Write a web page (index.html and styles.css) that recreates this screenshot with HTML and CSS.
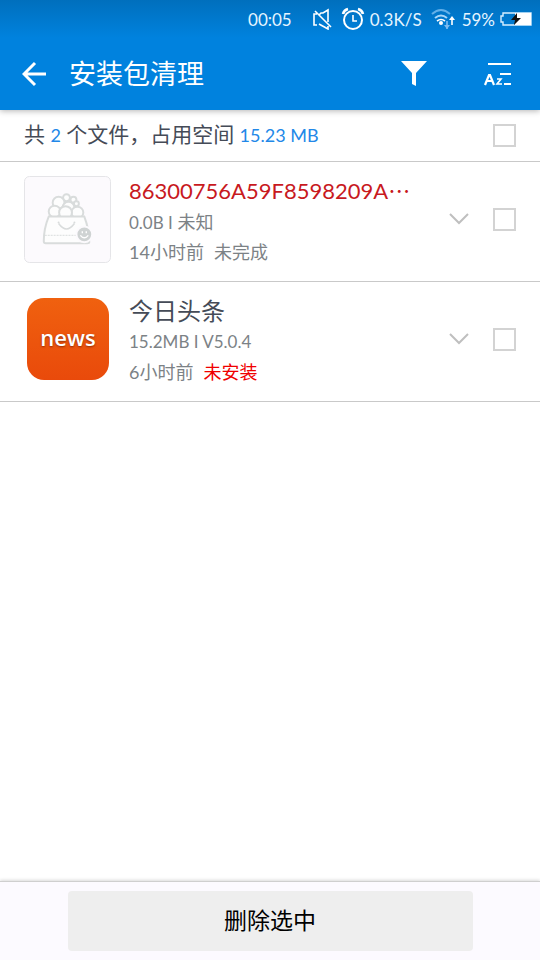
FILE: index.html
```html
<!DOCTYPE html>
<html lang="zh-CN">
<head>
<meta charset="utf-8">
<meta name="viewport" content="width=device-width, initial-scale=1">
<title>安装包清理</title>
<link rel="stylesheet" href="styles.css">
</head>
<body>
<header class="top">
  <div class="status">
    <time class="clock">00:05</time>
    <svg class="mute" width="20" height="22" viewBox="0 0 20 22" fill="none" stroke="#fff" stroke-width="1.600"><path d="M5 6H2v11h3M7 7l2-2h2l5-3v12M7 16l9 5v-3M3 3l16 16"/></svg>
    <svg class="alarm" width="24" height="24" viewBox="0 0 24 24" fill="none" stroke="#fff"><circle cx="12" cy="13" r="9" stroke-width="2"/><path d="M12 8v6h4" stroke-width="1.600"/><path d="M2 7q1-4 5-5M17 2q4 1 5 5" stroke-width="2.600"/></svg>
    <span class="speed">0.3K/S</span>
    <svg class="wifi" width="26" height="22" viewBox="0 0 26 22" fill="none" stroke="#fff"><path d="M1 6q9-8 18 0" stroke="#63b0e8" stroke-width="2"/><path d="M4 10q6-5 12 0" stroke="#a9d6f8" stroke-width="2"/><path d="M6 13q4-3 8 0" stroke-width="1.600"/><circle cx="10" cy="15" r="2" fill="#fff" stroke="none"/><path d="M16 13v8" stroke="#7dbcf0" stroke-width="1.600"/><path d="M13 17h6l-3 4z" fill="#7dbcf0" stroke="none"/><path d="M21 17V10" stroke-width="1.600"/><path d="M18 12l3-4 3 4z" fill="#fff" stroke="none"/></svg>
    <span class="percent">59%</span>
    <svg class="battery" width="32" height="14" viewBox="0 0 32 14"><path d="M3 1h28v12H3v-3H1V4h2z" fill="none" stroke="#d8efff" stroke-width="1.400"/><path d="M15 1h16v12H15z" fill="#fff"/><path d="M17 1l-6 7h4l-1 5 7-7h-4z" fill="#111"/></svg>
  </div>
  <div class="bar">
    <button class="icon-button back" aria-label="返回"><svg width="26" height="26" viewBox="0 0 26 26" fill="none" stroke="#fff" stroke-width="3"><path d="M2 13h22M13 2L2 13l11 11"/></svg></button>
    <h1>安装包清理</h1>
    <button class="icon-button" aria-label="筛选"><svg width="28" height="28" viewBox="0 0 28 28" fill="#fff"><path d="M1 1h26L16 13v13l-4-2V13z"/></svg></button>
    <button class="icon-button sort" aria-label="排序"><svg width="30" height="28" viewBox="0 0 30 28" fill="none" stroke="#fff"><path d="M5 4h23M17 14h11M21 24h7" stroke-width="2"/><path d="M2 25l4-10h1l4 10M3.500 21h6" stroke-width="2.200"/><path d="M14 19h4l-4 5h5" stroke-width="1.600"/></svg></button>
  </div>
</header>
<main>
  <label class="summary"><span class="summary-text">共 <b>2</b> 个文件，占用空间 <b>15.23 MB</b></span><input type="checkbox"></label>
  <ul class="list">
    <li class="row">
      <svg class="thumb" width="87" height="87" viewBox="0 0 88 88" fill="none" stroke="#d9dcdc" stroke-width="2"><rect x=".5" y=".5" width="87" height="87" rx="5" fill="#fcfafd" stroke="#e5e5e8" stroke-width="1"/><g fill="#fdfdfd"><circle cx="43" cy="22" r="3.500"/><circle cx="50" cy="24" r="3"/><circle cx="53" cy="28" r="2.500"/><circle cx="35" cy="27" r="6"/><circle cx="45" cy="32" r="6"/><circle cx="31" cy="36" r="6"/><circle cx="54" cy="37" r="6"/><circle cx="42" cy="37" r="6.500"/><path d="M25 41h36q5 13 5 26 0 1-2 1H22q-2 0-2-2 0-13 5-25z"/></g><path d="M21 60h40" stroke-width="1" stroke-dasharray="2 1"/><path d="M35 48q8 11 16 0" stroke-width="1.500"/><circle cx="35" cy="47" r="1" fill="#d9dcdc" stroke="none"/><circle cx="51" cy="47" r="1" fill="#d9dcdc" stroke="none"/><circle cx="61" cy="59" r="8" fill="#cfd3d3" stroke="#fcfafd"/><path d="M57 60q4 5 8 0M59 56v2M63 56v2" stroke="#fff" stroke-width="1.400"/></svg>
      <div class="info">
        <h2 class="name broken">86300756A59F8598209A<span class="cjk">…</span></h2>
        <p class="meta"><span><span class="latin">0.0B I</span> 未知</span></p>
        <p><span>14小时前</span><span>未完成</span></p>
      </div>
      <button class="expand" aria-label="展开"><svg width="20" height="12" viewBox="0 0 20 12" fill="none" stroke="#bfbfbf" stroke-width="2"><path d="M1 1l9 9 9-9"/></svg></button>
      <input type="checkbox" aria-label="选择 86300756A59F8598209A">
    </li>
    <li class="row">
      <div class="thumb news"><span>news</span></div>
      <div class="info">
        <h2 class="name">今日头条</h2>
        <p class="meta"><span class="latin">15.2MB I V5.0.4</span></p>
        <p><span>6小时前</span><span class="alert">未安装</span></p>
      </div>
      <button class="expand" aria-label="展开"><svg width="20" height="12" viewBox="0 0 20 12" fill="none" stroke="#bfbfbf" stroke-width="2"><path d="M1 1l9 9 9-9"/></svg></button>
      <input type="checkbox" aria-label="选择 今日头条">
    </li>
  </ul>
</main>
<footer class="actions"><button class="delete">删除选中</button></footer>
</body>
</html>
```
FILE: styles.css
```css
* { box-sizing: border-box; }
body {
  margin: 0;
  min-height: 100vh;
  display: flex;
  flex-direction: column;
  background: #fff;
  color: #454b57;
  font-family: Lato, "Noto Sans CJK SC", sans-serif;
}
h1, h2, p, ul { margin: 0; padding: 0; font-weight: 400; }
button { border: 0; padding: 0; background: none; font-family: inherit; }
svg { display: block; flex: none; }

.top {
  background: linear-gradient(#006fbd, #0082de 38px);
  color: #fff;
  box-shadow: 0 1px 6px rgba(0, 0, 0, .3);
}
.status {
  height: 38px;
  padding-right: 8px;
  display: flex;
  align-items: center;
  justify-content: flex-end;
  font-size: 17px;
  color: #e6f5ff;
}
.clock { margin-right: 20px; }
.mute { margin-right: 9px; }
.alarm { margin-right: 5px; }
.speed { margin-right: 9px; }
.wifi { margin-right: 5px; }
.percent { margin-right: 5px; }
.bar {
  height: 72px;
  padding: 0 27px 0 22px;
  display: flex;
  align-items: center;
}
h1 { flex: 1; font-size: 27px; line-height: 36px; }
.back { margin-right: 21px; }
.sort { margin-left: 55px; }

input[type="checkbox"] {
  appearance: none;
  flex: none;
  width: 23px;
  height: 23px;
  margin: 0;
  border: 2px solid #d3d3d3;
  background: #fff;
}
input[type="checkbox"]:checked { background: #0082de; }
.summary {
  display: flex;
  align-items: center;
  justify-content: space-between;
  height: 52px;
  padding: 0 24px;
  border-bottom: 1px solid #c9c9c9;
  font-size: 21px;
  line-height: 32px;
}
.summary b { font-size: 18px; font-weight: 400; color: #2288e8; }
.summary-text { padding-bottom: 2px; }
main { flex: 1; }
.list { list-style: none; }
.row {
  display: flex;
  align-items: center;
  padding: 9px 24px 14px;
  border-bottom: 1px solid #c9c9c9;
}
.thumb { flex: none; margin-right: 18px; }
.news {
  width: 82px;
  height: 82px;
  margin: 0 20px 0 3px;
  border-radius: 17px;
  display: flex;
  align-items: center;
  justify-content: center;
  background: linear-gradient(#f0610f, #e94a0b);
  color: #fff;
  font: 600 22px "Open Sans", sans-serif;
  text-shadow: 0 1px 2px rgba(90, 20, 0, .6);
}
.news span { padding-bottom: 4px; }
.info { flex: 1; min-width: 0; padding-top: 4px; }
.name { height: 32px; font-size: 24px; line-height: 32px; white-space: nowrap; }
.broken { font-size: 22px; color: #c8191e; }
.cjk { font-family: "Noto Sans CJK SC", sans-serif; line-height: 1; }
.info p {
  display: flex;
  gap: 10px;
  height: 30px;
  font-size: 18px;
  line-height: 30px;
  color: #7c8286;
}
.info .latin { font-size: 17px; }
.info .alert { color: #f00000; }
.expand { margin-right: 24px; }

.actions {
  display: flex;
  justify-content: center;
  padding: 9px 12.5%;
  background: #fcfaff;
  border-top: 1px solid #cfcfcf;
  box-shadow: 0 -1px 3px rgba(0, 0, 0, .15);
}
.delete {
  width: 100%;
  height: 60px;
  padding-bottom: 4px;
  border-radius: 4px;
  background: #eee;
  color: #000;
  font-size: 23px;
}
```
